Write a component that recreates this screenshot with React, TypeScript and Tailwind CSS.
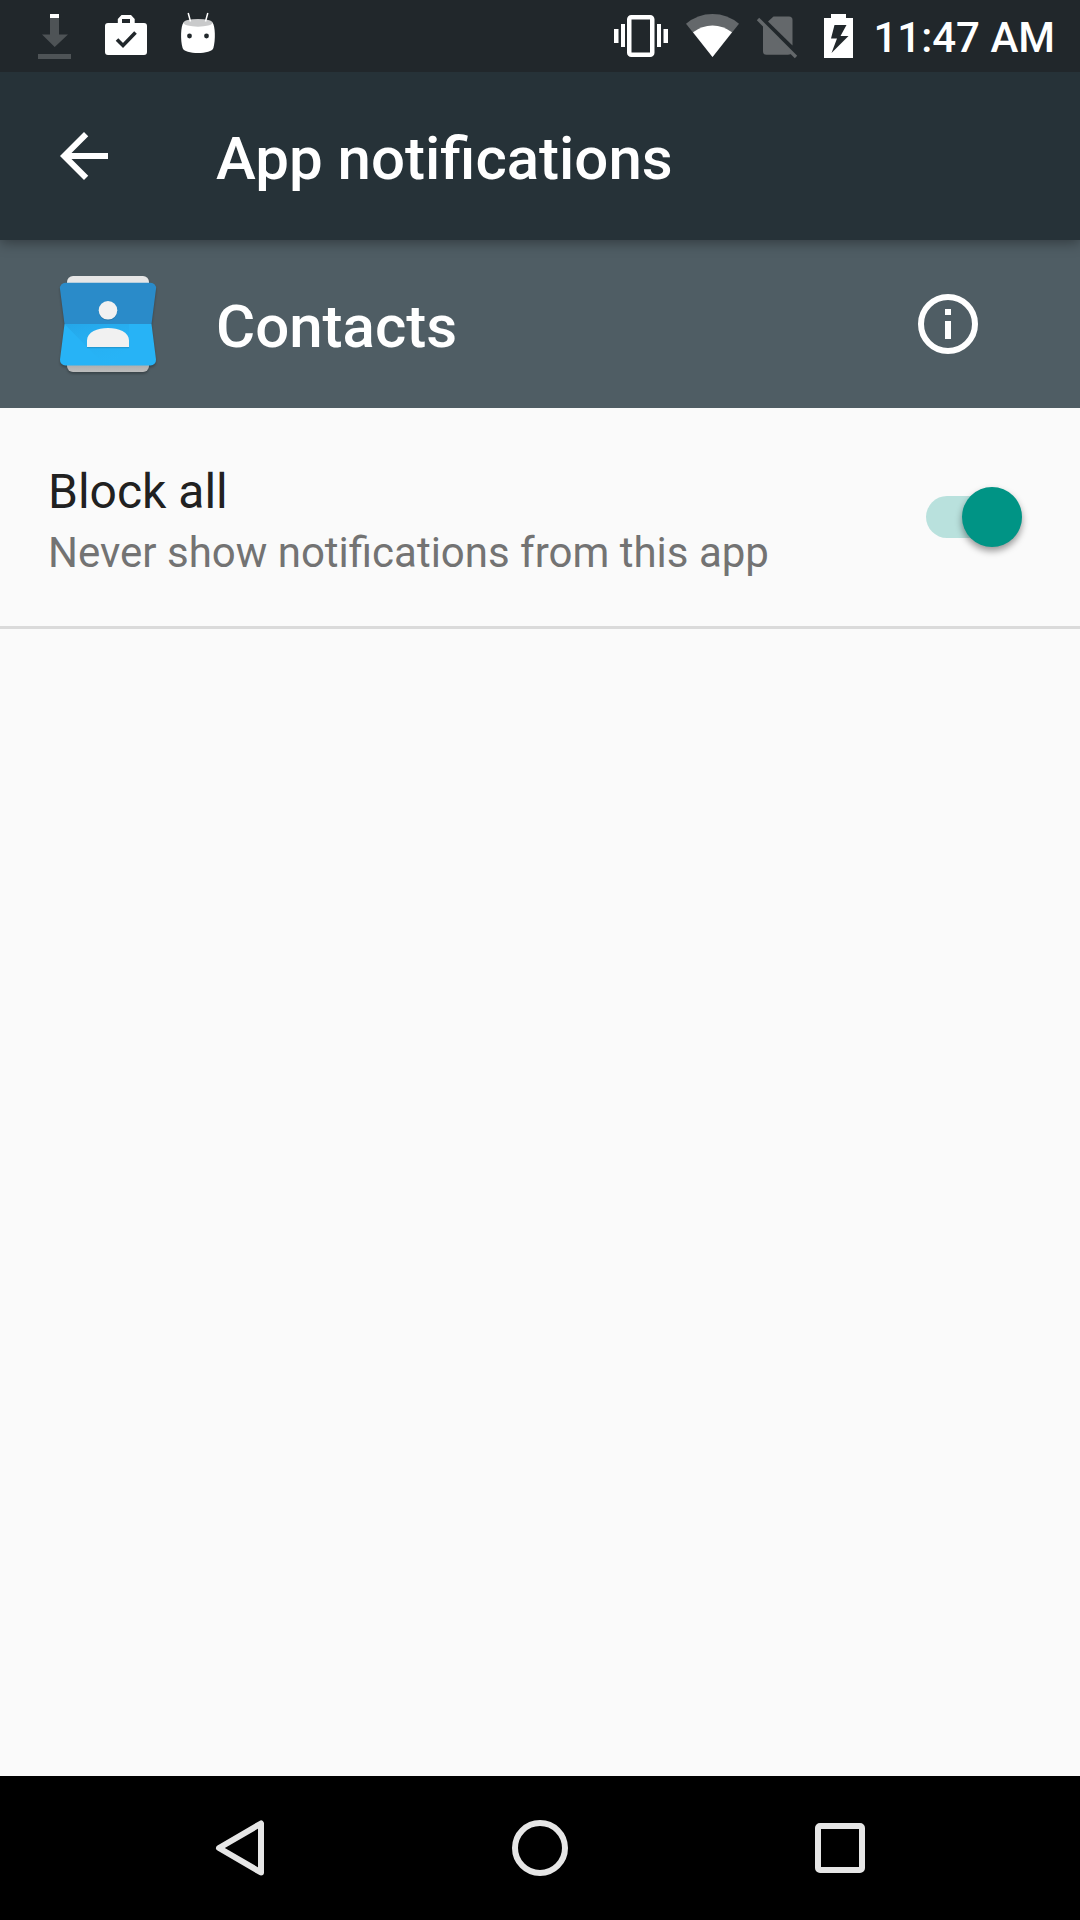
import { useState } from "react";

function DownloadIcon() {
  return (
    <svg className="h-[72px] w-[72px] shrink-0" viewBox="0 0 72 72" aria-hidden="true">
      <path d="M32 18h9v16.500h9L36.700 47 24 34.500h8z" fill="#4e5356" />
      <path d="M20 54h33v5H20z" fill="#4e5356" />
      <path d="M32 14h9v4h-9z" fill="#fff" />
    </svg>
  );
}

function BriefcaseIcon() {
  return (
    <svg className="h-[72px] w-[72px] shrink-0" viewBox="0 0 72 72" aria-hidden="true">
      <path
        fill="#fff"
        fillRule="evenodd"
        d="M18 23h9.800v-4l3.700-4h9.500l3.700 4v4H54a3 3 0 0 1 3 3v26a3 3 0 0 1-3 3H18a3 3 0 0 1-3-3V26a3 3 0 0 1 3-3zM32 19v4h8v-4z"
      />
      <path d="M27 39.500l6 6L45.500 32.500" fill="none" stroke="#21272b" strokeWidth="3.600" />
    </svg>
  );
}

function RobotIcon() {
  return (
    <svg className="h-[72px] w-[72px] shrink-0" viewBox="0 0 72 72" aria-hidden="true">
      <path
        d="M21.500 22.500C18.700 26 18.300 40 20.600 48c.9 3.400 8 5 15.400 5s14.500-1.600 15.400-5c2.300-8 1.900-22-.9-25.500z"
        fill="#fff"
      />
      <ellipse cx="36" cy="22.800" rx="14.500" ry="3.900" fill="#c9cacb" />
      <path d="M26.200 13l2.300 8.500M45.800 13l-2.300 8.500" stroke="#fff" strokeWidth="1.500" />
      <circle cx="27.500" cy="36" r="2.400" fill="#21272b" />
      <circle cx="44.500" cy="36" r="2.400" fill="#21272b" />
    </svg>
  );
}

function VibrateIcon() {
  return (
    <svg className="h-[72px] w-[72px] shrink-0" viewBox="0 0 72 72" aria-label="Vibrate">
      <rect x="24.250" y="17.250" width="23" height="37.500" rx="2" fill="none" stroke="#fff" strokeWidth="4.500" />
      <path d="M9 29h4.500v14H9zM16 24h4v23h-4zM52 24h4v23h-4zM58.500 29H63v14h-4.500z" fill="#fff" />
    </svg>
  );
}

function WifiIcon() {
  return (
    <svg className="h-[72px] w-[72px] shrink-0" viewBox="0 0 72 72" aria-label="Wi-Fi">
      <path d="M35.500 57L9 23.800Q20.500 14 35.500 14T62 23.800z" fill="#64686b" />
      <path d="M35.500 57L16 32.300Q25 25.500 35.500 25.500T55 32.300z" fill="#fff" />
    </svg>
  );
}

function NoSimIcon() {
  return (
    <svg className="h-[72px] w-14 shrink-0" viewBox="0 0 56 72" aria-label="No SIM card">
      <path d="M24.500 16.500H40a3.500 3.500 0 0 1 3.500 3.500v25.500L19 21.500z" fill="#64686b" />
      <path d="M14 23.500l29 29q-1 2.200-4 2.200H17.500A3.500 3.500 0 0 1 14 51.200z" fill="#64686b" />
      <path d="M9 19l38 38" stroke="#64686b" strokeWidth="3.400" />
    </svg>
  );
}

function BatteryIcon() {
  return (
    <svg className="h-[72px] w-[68px] shrink-0" viewBox="0 0 68 72" aria-label="Battery charging">
      <path
        fill="#fff"
        fillRule="evenodd"
        d="M26 14h15v4h7v40H19V18h7zM29.500 25L26 38.500h6L26.500 53 43.500 36h-8L41.500 25z"
      />
    </svg>
  );
}

function BackArrowIcon() {
  return (
    <svg className="size-[72px]" viewBox="0 0 24 24" fill="#fff" aria-hidden="true">
      <path d="M20 11H7.830l5.590-5.590L12 4l-8 8 8 8 1.410-1.410L7.830 13H20v-2z" />
    </svg>
  );
}

function ContactsIcon() {
  return (
    <svg className="size-[108px] shrink-0 drop-shadow-[0_2px_1px_rgba(0,0,0,0.25)]" viewBox="0 0 108 108" aria-hidden="true">
      <defs>
        <linearGradient id="lower-card" x1="0" y1="0" x2="0" y2="1">
          <stop offset="0" stopColor="#a0a0a0" />
          <stop offset="1" stopColor="#bdbdbd" />
        </linearGradient>
        <linearGradient id="fold-shade" x1="0" y1="0" x2="0.500" y2="1">
          <stop offset="0" stopColor="#1e88c9" stopOpacity="0.300" />
          <stop offset="1" stopColor="#29b6f6" stopOpacity="0.100" />
        </linearGradient>
      </defs>
      <path d="M19 6h70a6 6 0 0 1 6 6v9H13v-9a6 6 0 0 1 6-6z" fill="#e6e6e6" />
      <path d="M13 88h82v8a6 6 0 0 1-6 6H19a6 6 0 0 1-6-6z" fill="url(#lower-card)" />
      <path d="M11.500 12.700h85a5.500 5.500 0 0 1 5.500 6.300L97.500 54h-87L6 19a5.500 5.500 0 0 1 5.500-6.300z" fill="#2a8bc9" />
      <path d="M10.500 54h87L102 89.500a5.500 5.500 0 0 1-5.500 5.900h-85A5.500 5.500 0 0 1 6 89.500z" fill="#27b3f6" />
      <path d="M10.500 54H75v24L57 95.400H51z" fill="url(#fold-shade)" />
      <circle cx="54" cy="41.300" r="9.300" fill="#00000022" />
      <circle cx="54" cy="40.300" r="9.300" fill="#f1f1f1" />
      <path d="M33 78.200h42v-3H33z" fill="#00000022" />
      <path d="M33 77V70.500C33 62 43.500 58 54 58s21 4 21 12.500V77z" fill="#f1f1f1" />
    </svg>
  );
}

function InfoIcon() {
  return (
    <svg className="size-[72px]" viewBox="0 0 72 72" aria-hidden="true">
      <circle cx="36" cy="36" r="27" fill="none" stroke="#fff" strokeWidth="6" />
      <path d="M33 21h6v6h-6zM33 33h6v18h-6z" fill="#fff" />
    </svg>
  );
}

function StatusBar() {
  return (
    <div className="relative z-20 flex h-[72px] items-center justify-between bg-[#21272b] pr-[25px] pl-[18px] text-white">
      <div className="flex">
        <DownloadIcon />
        <BriefcaseIcon />
        <RobotIcon />
      </div>
      <div className="flex items-center">
        <VibrateIcon />
        <WifiIcon />
        <NoSimIcon />
        <BatteryIcon />
        <time className="pt-1 text-[42px] leading-[48px] font-medium whitespace-nowrap">11:47 AM</time>
      </div>
    </div>
  );
}

function NavigationBar() {
  return (
    <nav className="flex h-36 bg-black px-[90px]" aria-label="System navigation">
      <button type="button" aria-label="Back" className="flex flex-1 items-center justify-center">
        <svg className="size-[72px]" viewBox="0 0 72 72" fill="none" stroke="#e6e6e6" strokeWidth="6" strokeLinejoin="round">
          <path d="M57 11.500v49L15 36z" />
        </svg>
      </button>
      <button type="button" aria-label="Home" className="flex flex-1 items-center justify-center">
        <svg className="size-[72px]" viewBox="0 0 72 72" fill="none" stroke="#e6e6e6" strokeWidth="6">
          <circle cx="36" cy="36" r="25" />
        </svg>
      </button>
      <button type="button" aria-label="Recent apps" className="flex flex-1 items-center justify-center">
        <svg className="size-[72px]" viewBox="0 0 72 72" fill="none" stroke="#e6e6e6" strokeWidth="6">
          <rect x="14" y="14" width="44" height="44" rx="2" />
        </svg>
      </button>
    </nav>
  );
}

export default function App() {
  const [blocked, setBlocked] = useState(true);

  return (
    <div className="flex min-h-screen flex-col bg-[#fafafa] font-[Roboto,sans-serif]">
      <StatusBar />
      <header className="relative z-10 flex h-[168px] items-center bg-[#263238] pl-12 text-white shadow-[0_3px_12px_rgba(0,0,0,0.35)]">
        <button type="button" aria-label="Navigate up">
          <BackArrowIcon />
        </button>
        <h1 className="ml-24 pt-1.5 text-[60px] leading-[72px] font-medium">App notifications</h1>
      </header>
      <main className="flex-1">
        <section className="flex h-[168px] items-center bg-[#4f5d64] pr-24 pl-[54px] text-white">
          <ContactsIcon />
          <h2 className="ml-[54px] flex-1 pt-1.5 text-[60px] leading-[72px] font-medium">Contacts</h2>
          <button type="button" aria-label="App info">
            <InfoIcon />
          </button>
        </section>
        <div className="flex items-center justify-between border-b-[3px] border-[#dadada] py-11 pr-[58px] pl-12">
          <div className="pt-2">
            <label htmlFor="block-all" className="block text-[48px] leading-[64px] text-[#212121]">
              Block all
            </label>
            <p id="block-all-summary" className="text-[42px] leading-[58px] text-[#737373]">
              Never show notifications from this app
            </p>
          </div>
          <input
            id="block-all"
            type="checkbox"
            role="switch"
            aria-describedby="block-all-summary"
            checked={blocked}
            onChange={(event) => setBlocked(event.target.checked)}
            className="relative h-[60px] w-24 shrink-0 appearance-none before:absolute before:inset-x-0 before:top-[9px] before:h-[42px] before:rounded-full before:bg-[#bdbdbd] after:absolute after:top-0 after:left-0 after:size-[60px] after:rounded-full after:bg-[#f1f1f1] after:shadow-[0_4px_7px_rgba(0,0,0,0.4)] checked:before:bg-[#b9e1dd] checked:after:right-0 checked:after:left-auto checked:after:bg-[#009485]"
          />
        </div>
      </main>
      <NavigationBar />
    </div>
  );
}
